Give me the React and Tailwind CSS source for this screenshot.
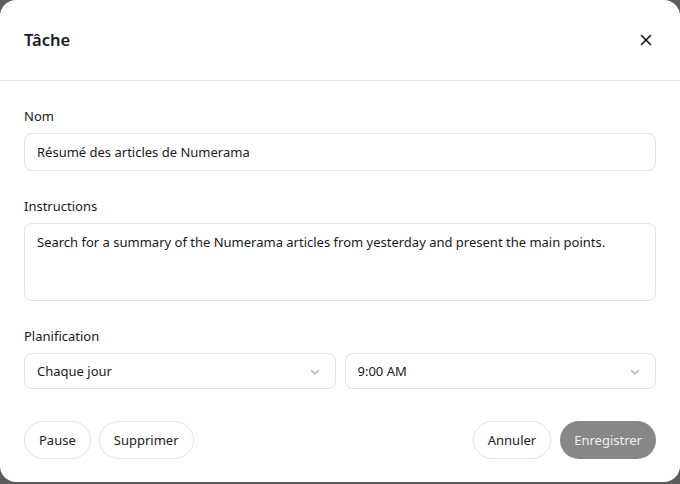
import React from "react";

function Chevron() {
  return (
    <svg width="12" height="12" viewBox="0 0 12 12" fill="none" stroke="#9ca3af" strokeWidth="1.1" strokeLinecap="round" strokeLinejoin="round">
      <path d="M2.5 4.5 L6 8 L9.5 4.5" />
    </svg>
  );
}

export default function App() {
  return (
    <div className="w-[680px] h-[484px] bg-[#5c5c5c] overflow-hidden" style={{ fontFamily: '"Noto Sans", "Open Sans", sans-serif' }}>
      <div className="w-[680px] h-[482px] bg-white rounded-[16px] flex flex-col text-[#1a1a1a]">
        <div className="h-[81px] flex items-center justify-between px-[24px] border-b border-[#e5e5e5] shrink-0">
          <div className="text-[16.5px] font-semibold">Tâche</div>
          <svg width="12" height="12" viewBox="0 0 12 12" className="mr-[4px]" stroke="#111" strokeWidth="1.6" strokeLinecap="round">
            <path d="M1.5 1.5 L10.5 10.5 M10.5 1.5 L1.5 10.5" />
          </svg>
        </div>
        <div className="px-[24px] pt-[25px] flex flex-col text-[13px]">
          <label className="leading-[20px] mb-[7px]">Nom</label>
          <div className="h-[38px] border border-[#e3e3e3] rounded-[8px] flex items-center px-[12px] pt-[1px]">Résumé des articles de Numerama</div>
          <label className="leading-[20px] mt-[25px] mb-[7px]">Instructions</label>
          <div className="h-[78px] border border-[#e3e3e3] rounded-[8px] px-[12px] pt-[8px] leading-[20px]">
            Search for a summary of the Numerama articles from yesterday and present the main points.
          </div>
          <label className="leading-[20px] mt-[25px] mb-[7px]">Planification</label>
          <div className="flex gap-[9px]">
            <div className="flex-1 h-[36px] border border-[#e3e3e3] rounded-[8px] flex items-center justify-between pl-[12px] pr-[14px] pt-[1px]">
              <span>Chaque jour</span>
              <Chevron />
            </div>
            <div className="flex-1 h-[36px] border border-[#e3e3e3] rounded-[8px] flex items-center justify-between pl-[12px] pr-[14px] pt-[1px]">
              <span>9:00 AM</span>
              <Chevron />
            </div>
          </div>
          <div className="flex items-center justify-between mt-[32px]">
            <div className="flex gap-[8px]">
              <button className="h-[38px] px-[14px] pt-[2px] rounded-full border border-[#e3e3e3] bg-white">Pause</button>
              <button className="h-[38px] px-[14px] pt-[2px] rounded-full border border-[#e3e3e3] bg-white">Supprimer</button>
            </div>
            <div className="flex gap-[9px]">
              <button className="h-[38px] px-[14px] pt-[2px] rounded-full border border-[#e3e3e3] bg-white">Annuler</button>
              <button className="h-[38px] px-[14px] pt-[2px] rounded-full bg-[#878787] text-[#f2f2f2]">Enregistrer</button>
            </div>
          </div>
        </div>
      </div>
    </div>
  );
}
